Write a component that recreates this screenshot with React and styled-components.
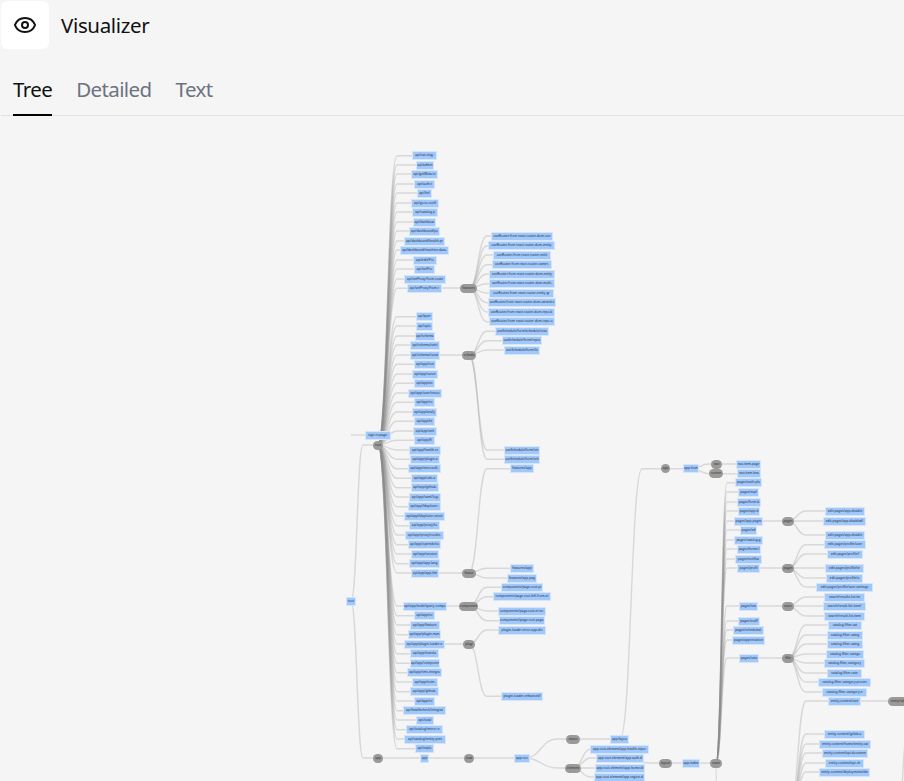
import React from "react";
import styled, { createGlobalStyle } from "styled-components";
import { Eye } from "lucide-react";

const TOP = 116;
const HEIGHT = 665;

const GlobalStyle = createGlobalStyle`
  html, body { margin: 0; padding: 0; background: #f5f5f5; overflow: hidden; }
  body { font-family: "Noto Sans", "Open Sans", sans-serif; }
`;

const Page = styled.div`
  width: 904px;
  height: 781px;
  display: flex;
  flex-direction: column;
  background: #f5f5f5;
`;
const Header = styled.header`
  display: flex;
  align-items: center;
  gap: 12px;
  padding: 1px;
  height: 48px;
`;
const IconBox = styled.div`
  width: 48px;
  height: 48px;
  border-radius: 6px;
  background: #fff;
  display: flex;
  align-items: center;
  justify-content: center;
  color: #111;
`;
const Title = styled.h1`
  margin: 0 0 1px;
  font-size: 20.5px;
  letter-spacing: -0.35px;
  font-weight: 400;
  color: #111;
`;
const Tabs = styled.nav`
  height: 65px;
  box-sizing: border-box;
  margin: 1px 0 0 1px;
  padding: 0 12px;
  display: flex;
  align-items: stretch;
  gap: 24px;
  border-bottom: 1px solid #e1e1e1;
`;
const Tab = styled.div`
  display: flex;
  align-items: flex-end;
  padding-bottom: 11px;
  margin-bottom: -1px;
  font-size: 20.5px;
  letter-spacing: -0.6px;
  line-height: 28px;
  color: ${(p) => (p.$active ? "#111" : "#6b7280")};
  border-bottom: 2px solid ${(p) => (p.$active ? "#000" : "transparent")};
`;
const Canvas = styled.main`
  position: relative;
  flex: 1;
  overflow: hidden;
`;
const Edges = styled.svg`
  position: absolute;
  left: 0;
  top: 0;
`;
const Edge = styled.path`
  fill: none;
  stroke: #8c8c8c;
  stroke-opacity: 0.28;
  stroke-width: 1.4;
`;
const Leaf = styled.div`
  position: absolute;
  box-sizing: border-box;
  height: 9px;
  border: 1px solid #d6e5f9;
  background: #a0c8fb;
  color: #1f2937;
  font-size: 3.2px;
  line-height: 7px;
  text-align: center;
  white-space: nowrap;
  overflow: hidden;
`;
const Pill = styled.div`
  position: absolute;
  box-sizing: border-box;
  height: 9px;
  border-radius: 4.5px;
  background: #9b9a98;
  color: #2d2d2d;
  font-size: 3.2px;
  line-height: 9px;
  text-align: center;
  white-space: nowrap;
  overflow: hidden;
`;

/* Node labels are approximations: the reference's diagram text is too small and
   blurred to read, so only the node positions and widths are measured from it.
   [label, left, right, y] */
const leaves = [
  ["api/cat-slug.ts", 412, 437, 155.7], ["api/admin", 416, 434, 165], ["api/getMeta.ts", 411, 438, 174], ["api/auth.tsx", 414, 435, 184],
  ["api/hello", 417, 432, 193], ["api/go-to-config", 411, 439, 203], ["api/catalog-page", 412, 438, 212], ["api/dashboard", 413, 436, 222],
  ["api/dashboard/policy", 409, 440, 231], ["api/dashboard/health-provider", 404, 445, 241], ["api/dashboard/machine-data-list-routes", 400, 449, 250],
  ["api/edit/Profile", 413, 437, 260], ["api/setProxy", 414, 435, 269], ["api/setProxy/from-route/item", 404, 446, 279], ["api/setProxy/from-route", 407, 442, 288.3],
  ["api/queries", 416, 433, 316.7], ["api/uploads", 416, 433, 326], ["api/schema", 415, 435, 336], ["api/schema/settings", 410, 440, 345], ["api/schema/curated", 410, 440, 355],
  ["api/app/config", 414, 436, 364.3], ["api/app/survey", 412, 438, 374], ["api/app/user", 414, 435, 383.3], ["api/app/user/resource", 408, 442, 393],
  ["api/app/roles", 414, 435, 402.3], ["api/app/analytics", 412, 437, 412], ["api/app/test", 414, 435, 421.3], ["api/app/settings", 413, 437, 431], ["api/app/files", 414, 435, 440.3],
  ["api/app/health-report", 409, 441, 450], ["api/app/plugin-auth", 410, 440, 459.3], ["api/app/microsoft-auth", 408, 441, 468.7], ["api/app/oidc-auth", 411, 438, 478.3],
  ["api/app/github-auth", 411, 439, 487.7], ["api/app/saml/login-auth", 409, 441, 497], ["api/app/ldap/user-auth", 408, 441, 506.7], ["api/app/ldap/user-server-auth", 404, 445, 516],
  ["api/app/proxy/token-auth", 409, 440, 525.7], ["api/app/proxy/cookie-token-auth", 405, 444, 535], ["api/app/openidc/sso-auth", 408, 441, 544.7], ["api/app/sessions", 411, 439, 554],
  ["api/app/app-language", 409, 440, 563.7], ["api/app/app-theme", 411, 439, 573],
  ["api/app/node/query-component", 403, 447, 606], ["api/app/core", 414, 435, 615.7], ["api/app/feature-flags", 410, 440, 625], ["api/app/plugin-manager", 408, 441, 634.7], ["api/app/plugin-loader-entries", 404, 445, 644],
  ["api/app/translations", 410, 439, 653.7], ["api/app/components", 410, 440, 663.3], ["api/app/sms-integrations", 407, 442, 672.7], ["api/app/scim-auth", 412, 438, 682], ["api/app/github-auth", 410, 439, 691.7],
  ["api/app/roots", 414, 435, 701], ["api/healthcheck/integrations/plugin-health", 403, 446, 710.7], ["api/catalog", 416, 434, 720], ["api/catalog/mirror-entries", 406, 443, 729.7], ["api/catalog/entity-presentations", 404, 446, 739], ["api/explore", 415, 434, 748.7],
  ["app", 420, 429, 758],
  ["sign-in-page.tsx", 365, 391, 435], ["root", 346, 356, 601.7],
  ["useRoutes from react-router-dom-config-picker", 491, 553, 236], ["useRoutes from react-router-dom-entity-home-picker", 488, 555, 245.7], ["useRoutes from react-router-entity-picker", 493, 551, 255], ["useRoutes from react-router-owner-picker", 492, 552, 264.7],
  ["useRoutes from react-router-dom-entity-tags-picker", 489, 555, 274], ["useRoutes from react-router-dom-multi-entity-picker", 489, 555, 283.7], ["useRoutes from react-router-entity-groups-picker", 489, 554, 293], ["useRoutes from react-router-dom-owned-entity-picker", 488, 556, 302.7],
  ["useRoutes from react-router-dom-repo-branch-picker", 488, 555, 312], ["useRoutes from react-router-dom-repo-owner-picker", 489, 555, 321.7],
  ["useSchedule/form/schedule/create-form-dialog", 495, 549, 331.3], ["useSchedule/form/report-view", 502, 542, 340.7], ["useSchedule/form/list-view", 504, 540, 350],
  ["useSchedule/form/single-view", 504, 540, 450], ["useSchedule/form/schedules", 504, 540, 459.3],
  ["features/app-main", 510, 534, 468.7], ["features/app-high-light", 510, 534, 568.3], ["features/app-page-flow", 507, 537, 578],
  ["components/page-root-progress", 501, 543, 587.3], ["components/page-root-left-from-error-page", 493, 551, 596.7], ["components/page-root-error-display", 498, 546, 611], ["components/page-root-page-layout", 499, 545, 620.7],
  ["plugin-loader-error-app-disabled", 498, 546, 630], ["plugin-loader-enhanced/entry", 501, 543, 696.3],
  ["app-root", 514, 530, 758], ["app/layout.tsx", 610, 629, 739], ["app-root-element/app-health-report-dialog", 590, 649, 749], ["app-root-element/app-auth-display", 596, 644, 758], ["app-root-element/app-home-dialog", 595, 645, 768], ["app-root-element/app-region-display", 594, 645, 777],
  ["app-index", 682, 700, 763], ["app-home", 683, 699, 468.7], ["nav-item-page-menu", 736, 761, 464], ["nav-item-header", 737, 761, 473.7],
  ["pages/auth-plugin-list", 735, 762, 482.7], ["pages/explore", 738, 759, 492], ["pages/form-builder", 737, 761, 502], ["pages/app-docs", 738, 760, 511], ["pages/app-pages-disabled", 734, 763, 521],
  ["pages/edit", 740, 757, 530], ["pages/catalog-graph", 734, 763, 540], ["pages/home-list", 737, 761, 549], ["pages/notifications", 735, 762, 559], ["pages/profile", 737, 760, 568],
  ["pages/search", 739, 758, 606], ["pages/scaffold", 738, 760, 621], ["pages/scheduled-tasks", 733, 764, 630], ["pages/appreciation", 732, 765, 640], ["pages/catalog", 739, 759, 658],
  ["edit-pages/app-disabled/list-items", 825, 865, 511], ["edit-pages/app-disabled/user-pages", 823, 866, 521], ["edit-pages/app-disabled/user", 825, 865, 535],
  ["edit-pages/profile/user-templates", 824, 866, 544.7], ["edit-pages/profile/list-view", 827, 863, 554], ["edit-pages/profile/team-panels", 825, 864, 568], ["edit-pages/profile/user-list", 826, 863, 578], ["edit-pages/profile/user-settings/membership-page", 816, 873, 587],
  ["search/results-list-item/entry", 824, 865, 597], ["search/result-list-item/user-actions", 823, 866, 606], ["search/result-list-item/catalog", 824, 865, 616],
  ["catalog-filter-category-list", 828, 862, 625], ["catalog-filter-category-view", 827, 863, 635], ["catalog-filter-category-types", 827, 863, 644], ["catalog-filter-category-dropdown", 826, 864, 654], ["catalog-filter-category-lifecycle", 824, 865, 663],
  ["catalog-filter-category-tag", 827, 862, 673], ["catalog-filter-category-processing-status", 818, 871, 682], ["catalog-filter-category-namespace", 822, 867, 692],
  ["entity-content/overview", 828, 861, 701], ["entity-content/gitlab-actions", 824, 865, 734], ["entity-content/home/entity-owner", 819, 871, 744], ["entity-content/api-documentation", 822, 868, 753], ["entity-content/api-changes", 825, 864, 763], ["entity-content/deployments/details", 819, 870, 772],
];

/* [label, left, right, y] */
const pills = [
  ["route", 373, 383, 445], ["app", 373, 383, 758], ["features", 460, 477, 288], ["schedule", 462, 476, 355], ["features", 462, 476, 573], ["components", 459, 478, 606], ["plugins", 463, 475, 644],
  ["loader", 464, 474, 758], ["status", 566, 580, 739], ["elements", 565, 581, 768], ["layout", 659, 672, 763], ["app", 661, 670, 468.7], ["status", 711, 722, 464], ["content", 709, 723, 473.7],
  ["routes", 710, 722, 763], ["pages", 782, 794, 521], ["pages", 782, 794, 568], ["search", 782, 794, 606], ["filters", 782, 794, 658], ["entity/tabs", 888, 908, 701],
];

// keeps every label inside its node: the text is about 1.65px per character
const fitLabel = (label, width) => label.slice(0, Math.floor((width - 3) / 1.65));

const link = (sx, sy, bx, ty, tx) => {
  const mid = (sx + bx) / 2;
  return `M${sx} ${sy - TOP}C${mid} ${sy - TOP} ${mid} ${ty - TOP} ${bx} ${ty - TOP}H${tx}`;
};

const rowsIn = (from, to) => leaves.filter((n) => n[1] < 420 && n[1] > 399 && n[3] >= from && n[3] <= to);
const fan = (sx, sy, k, tx, ys) => ys.map((y) => link(sx, sy, sx + k, y, tx));
const straight = (x1, x2, y) => `M${x1} ${y - TOP}H${x2}`;

const edgePaths = [
  ...fan(351, 601.7, 12, 378, [445, 758]),
  straight(351, 378, 435),
  ...rowsIn(150, 750).map((n) => link(378, 445, 397, n[3], 425)),
  link(378, 758, 397, 758, 425),
  link(425, 288.3, 445, 288, 469),
  link(425, 355, 445, 355, 469),
  link(425, 573, 445, 573, 469),
  link(425, 606, 445, 606, 469),
  link(425, 644, 445, 644, 469),
  link(425, 758, 445, 758, 469),
  straight(469, 522, 758),
  ...fan(469, 288, 18, 521, [236, 245.7, 255, 264.7, 274, 283.7, 293, 302.7, 312, 321.7]),
  ...fan(469, 355, 18, 521, [331.3, 340.7, 350, 450, 459.3]),
  ...fan(469, 573, 18, 521, [468.7, 568.3, 578]),
  ...fan(469, 606, 18, 521, [587.3, 596.7, 611, 620.7]),
  ...fan(469, 644, 18, 521, [630, 696.3]),
  ...fan(525, 758, 32, 573, [739, 768]),
  ...fan(573, 739, 18, 620, [739]),
  ...fan(573, 768, 18, 620, [749, 758, 768, 777]),
  link(620, 739, 642, 468.7, 665),
  link(620, 758, 650, 763, 665),
  straight(665, 716, 763),
  straight(665, 691, 468.7),
  ...fan(691, 468.7, 18, 748, [464, 473.7]),
  ...[482.7, 492, 502, 511, 521, 530, 540, 549, 559, 568, 606, 621, 630, 640, 658].map((y) => link(716, 763, 727, y, 748)),
  link(716, 763, 718, 1000, 748),
  straight(748, 788, 521), straight(748, 788, 568), straight(748, 788, 606), straight(748, 788, 658),
  ...fan(788, 521, 18, 845, [511, 521, 535]),
  ...fan(788, 568, 18, 845, [544.7, 554, 568, 578, 587]),
  ...fan(788, 606, 18, 845, [597, 606, 616]),
  ...fan(788, 658, 18, 845, [625, 635, 644, 654, 663, 673, 682, 692]),
  ...fan(788, 830, 18, 845, [701, 734, 744, 753, 763, 772, 782]),
  straight(845, 900, 701),
  link(900, 800, 906, 740, 910),
];

export default function App() {
  return (
    <>
      <GlobalStyle />
      <Page>
        <Header>
          <IconBox>
            <Eye size={24} strokeWidth={2} />
          </IconBox>
          <Title>Visualizer</Title>
        </Header>
        <Tabs>
          <Tab $active>Tree</Tab>
          <Tab>Detailed</Tab>
          <Tab>Text</Tab>
        </Tabs>
        <Canvas>
          <Edges width="904" height={HEIGHT}>
            {edgePaths.map((d, i) => (
              <Edge key={i} d={d} />
            ))}
          </Edges>
          {leaves.map(([label, l, r, y], i) => (
            <Leaf key={i} style={{ left: l, top: y - 4.5 - TOP, width: r - l }}>
              {fitLabel(label, r - l)}
            </Leaf>
          ))}
          {pills.map(([label, l, r, y], i) => (
            <Pill key={i} style={{ left: l, top: y - 4.5 - TOP, width: r - l }}>
              {fitLabel(label, r - l)}
            </Pill>
          ))}
        </Canvas>
      </Page>
    </>
  );
}
